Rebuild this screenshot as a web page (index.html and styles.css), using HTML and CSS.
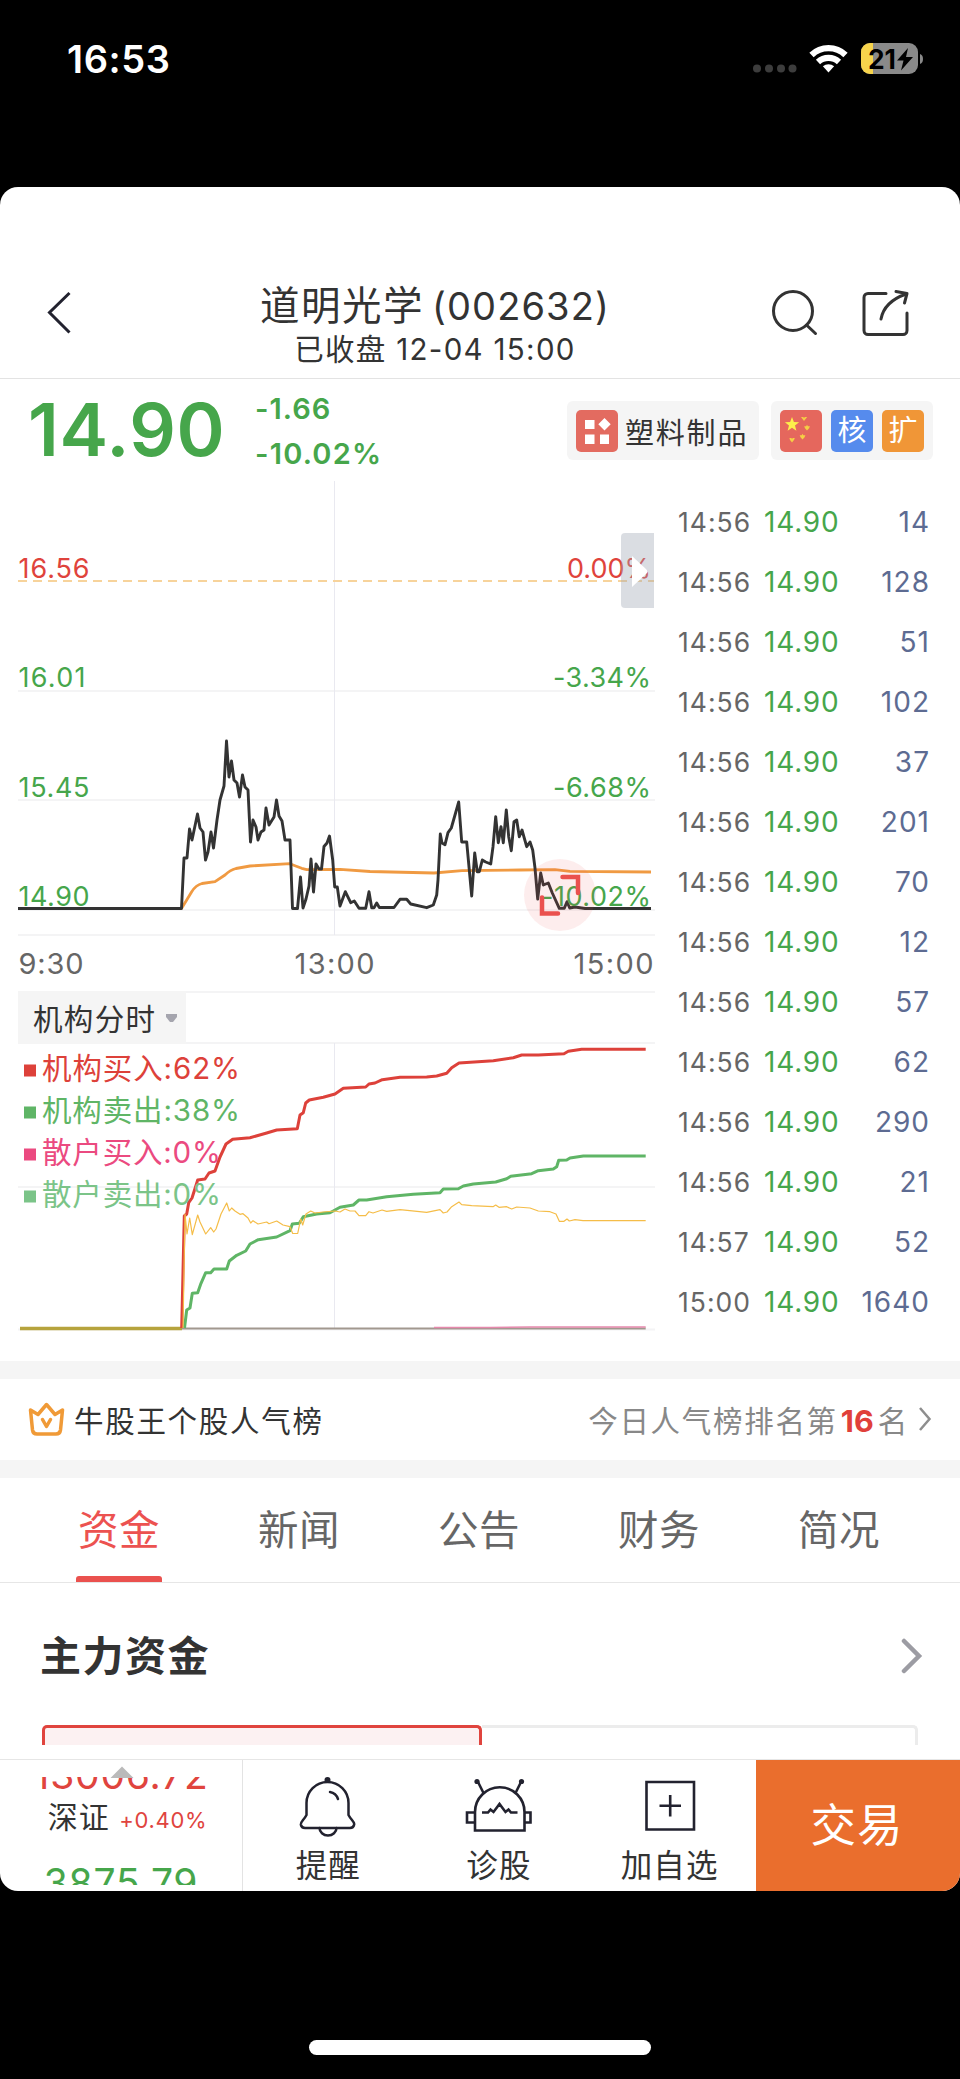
FILE: index.html
```html
<!DOCTYPE html>
<html lang="zh-CN">
<head>
<meta charset="utf-8">
<title>道明光学 (002632)</title>
<link rel="stylesheet" href="styles.css">
</head>
<body>
<div class="status">
  <span class="clock">16:53</span>
  <svg class="status-icons" width="172" height="34" viewBox="752 42 172 34">
    <g fill="#3d3d3d"><circle cx="757" cy="68.500" r="4"/><circle cx="769" cy="68.500" r="4"/><circle cx="781" cy="68.500" r="4"/><circle cx="792.500" cy="68.500" r="4"/></g>
    <g fill="none" stroke="#fff" stroke-width="6.200"><path d="M811.500 55a24.500 24.500 0 0 1 34 0"/><path d="M818 62a15.500 15.500 0 0 1 21 0"/></g>
    <path d="M828.500 72.500l-5.600-6.200a8.500 8.500 0 0 1 11.200 0z" fill="#fff"/>
    <rect x="861" y="43" width="57" height="31" rx="9" fill="#8a8a8a"/>
    <path d="M873 43h-3a9 9 0 0 0-9 9v13a9 9 0 0 0 9 9h3z" fill="#f7d44c"/>
    <path d="M920 54c4 1 4 9 0 10z" fill="#8a8a8a"/>
    <text class="battery-level" x="868" y="69" textLength="28" lengthAdjust="spacingAndGlyphs">21</text>
    <path d="M908 48l-11 12.500h6.500l-2.500 10 12-13.500h-7z" fill="#000"/>
  </svg>
</div>

<main class="sheet">
  <header class="header">
    <svg class="back" width="30" height="50" viewBox="44 288 30 50"><path d="M69.500 293L49.500 312.500 69.500 332.500" fill="none" stroke="#22222f" stroke-width="3"/></svg>
    <div class="heading">
      <h1 class="stock">道明光学<span class="code">(002632)</span></h1>
      <p class="session">已收盘 12-04 15:00</p>
    </div>
    <svg class="header-icons" width="142" height="50" viewBox="770 288 142 50">
      <g fill="none" stroke="#333" stroke-width="3" stroke-linecap="round" stroke-linejoin="round">
        <circle cx="793" cy="311" r="19.500"/><path d="M806.500 325l9 8.500"/>
        <path d="M886 293.500h-18a4 4 0 0 0-4 4v33a4 4 0 0 0 4 4h35a4 4 0 0 0 4-4v-17.500"/>
        <path d="M881 319c2-11 11-20 25-25M896 291.500l11 2-2.500 9.500"/>
      </g>
    </svg>
  </header>

  <section class="quote">
    <strong class="price">14.90</strong>
    <div class="change"><span>-1.66</span><span class="percent">-10.02%</span></div>
    <div class="chip chip-sector">
      <svg width="42" height="42" viewBox="0 0 42 42"><rect width="42" height="42" rx="5" fill="#e36b60"/><path fill="#fff" d="M9 10h9.500v9H9zM9 24.500h9.500V34H9zM24 24.500h9V34h-9zM28.500 8l6.200 6.300-6.200 6.300-6.200-6.300z"/></svg>
      <span class="sector">塑料制品</span>
    </div>
    <div class="chip chip-marks">
      <svg width="42" height="42" viewBox="0 0 42 42"><rect width="42" height="42" rx="5" fill="#e5675d"/>
        <path d="M12 7l1.900 5.100 5.200.2-4.100 3.300 1.400 5.200-4.400-3-4.400 3L9 15.600l-4.100-3.300 5.200-.2z" fill="#fdee4b"/>
        <path fill="#f5cf45" d="M24 11l-3-4h2l1 .7 1.200-.7h2zM27 20.500l-2-2.300-.8-2h2l.8-1.400.9 1.400h2l-.8 2zM22.500 29.500l-2-2.300-.8-2h2l.8-1.400.9 1.400h2l-.8 2zM12 32.500l-2-2.500-.6-2h1.800l.8.700 1-.7h1.800l-.8 2z"/></svg>
      <span class="mark mark-blue">核</span>
      <span class="mark mark-orange">扩</span>
    </div>
  </section>

  <section class="market">
    <svg class="charts" width="660" height="881" viewBox="0 480 660 881">
      <g class="grid">
        <path d="M18 691h637M18 800h637M18 910h637M18 935h637M18 992h637M18 1043h637M18 1187h637M18 1329.500h637" stroke="#f4f4f5" stroke-width="2"/>
        <path d="M334.500 481v454M334.500 1043v286" stroke="#e9e9f0" stroke-width="1"/>
        <path d="M18 581h636" stroke="#f7d39b" stroke-width="2" stroke-dasharray="9 6"/>
      </g>

      <g class="line">
        <path stroke="#f09a42" stroke-width="2.800" d="M18 908.500H181.500L186.700 900 191.700 891.700Q196 885 202 883.500L215 881.700 225 875Q230 870 236 868.500L250 866 290 863.700 295 865.700 301.700 868.300 306.700 869.700 340 869.300 370 871.500 434 873 462 870.700 520 870 555 869.700 570 871.300 651 872"/>
        <path stroke="#333" stroke-width="2.900" d="M18 908.500H181.500L184 858H187L189.500 829 192 840 197.500 814 200 828 203 832 205.500 860 208 852 211 832 213.500 848 217 820 220 800 224 786 226.500 741 229 777 231.500 761 234 780 237 783 239.500 797 242.500 775 245 787 248 790 250.500 842 253 820 256 827 258 840 261 832 264 830 266 808 269 825 274 817 276.500 800 279 816 282 821 285 840H290L292.500 908.500H297.500L300.500 877 303 908 306 899 309 886 311 859 313.500 892 316 864 319 869H321.500L324 846.500 327 843 329.500 836 332.700 860 334.700 887H337.300L340 906 345.300 891.700 350.700 902.700 354.300 901 359 908.300H365.700L369 891.700 371.700 907.700H374L376.700 903 379.300 907.500H394L400 899.300H406.700L410.700 904 426.700 907.700 433.300 905 436.700 895 438 880 440.300 834 442 843 445 844.700 448 832.700 451.300 828 458.700 802 461.700 842H466.700L471.700 896 474.700 853 477.300 871.700H479.300L482.300 860 485.700 862 490.700 864 493 846.700 495.700 816.700 498.300 842.700 501 826.700 503.300 842.700 506.300 810 508.700 836.700 511.300 850.700 514 821.700 516.700 820 519.300 836.700 522 830 526.700 846.700 530 842 532.700 850 535 868 537.700 899 540.700 873 543.300 885 548.300 883 552.300 893 559.300 908.300H564.300L567 901.700 569.700 908 575 907 585 908.500H651"/>
      </g>

      <g class="axis red"><text x="18.500" y="577.500" textLength="71">16.56</text><text x="567" y="577.500" textLength="84">0.00%</text></g>
      <g class="axis green">
        <text x="18.500" y="686.500" textLength="67">16.01</text><text x="18.500" y="796.500" textLength="71">15.45</text><text x="18.500" y="905.500" textLength="71">14.90</text>
        <text x="553" y="686.500" textLength="98">-3.34%</text><text x="553" y="796.500" textLength="98">-6.68%</text><text x="541" y="905.500" textLength="110">-10.02%</text>
      </g>
      <g class="hours"><text x="18.500" y="973.500" textLength="65">9:30</text><text x="294.500" y="973.500" textLength="80">13:00</text><text x="573.500" y="973.500" textLength="80">15:00</text></g>

      <path d="M654 533H625q-4 0-4 4v67q0 4 4 4H654z" fill="#9ea5b3" fill-opacity=".38"/>
      <path d="M632 556l15 14q1.500 1.500 0 3L632 587z" fill="#fff"/>
      <circle cx="560" cy="895" r="36" fill="#e94f4c" fill-opacity=".1"/>
      <path d="M562.500 877H578v16M542 897.500V913.500H558" fill="none" stroke="#ea514e" stroke-width="4.500" stroke-linecap="round"/>

      <rect x="18" y="991" width="168" height="53" fill="#f5f5f5"/>
      <text class="selector" x="33" y="1030" textLength="122">机构分时</text>
      <path d="M166 1014h11v3l-4 5h-3l-4-5z" fill="#a5a5ae"/>

      <g class="line">
        <path stroke="#b6a33d" stroke-width="3.600" d="M20 1328.500H182"/>
        <path stroke="#a1988f" stroke-width="1.800" d="M182 1328.500H645.700"/>
        <path stroke="#e689ad" stroke-width="1.500" d="M434 1327.500H490L530 1327H645.700"/>
        <path stroke="#dd413a" stroke-width="3" d="M181.700 1328L184.300 1216 186.700 1214 188.700 1202.700 192 1198 197.700 1180 205 1179 209 1173 215 1171 220 1157 226 1144 232.700 1139.300 250 1137.700 266.700 1133 276.700 1130 297.300 1128.700 300 1115 303.300 1112.700 305.700 1103 309.300 1100 323.300 1097.300 335 1094 343.300 1088.300 365.700 1087 369 1084 375 1083 382.300 1079.700 400 1077.300 426.700 1077 436.700 1076 446.700 1073.300 451.700 1067.700 459 1063 493.300 1060.700 513.300 1057.700 521.700 1055 538.300 1055 564 1053.700 568.300 1051.300 581.700 1049.300H645.700"/>
        <path stroke="#5fb566" stroke-width="3" d="M184.500 1328L186.700 1310 190 1308 192.300 1293.300 197.700 1292.700 201 1283.300 205.700 1272.700H210.700L214 1269H226.700L229.300 1261 236.700 1255.300 245.700 1251 250 1244 258.300 1239.700 276.700 1237 290 1230.700 292.300 1224 299.300 1223.300 303.300 1216.700 316.700 1214 330 1212.700 340 1207.300 353.300 1205 359 1200H366.700L386.700 1196.700 413.300 1194.300 440 1192.700 443.300 1189 458.300 1188.700 463.300 1186 473.300 1184 495.700 1182 506.700 1178.700 510.700 1176.300 531.700 1173.700 538.300 1170.700 553.300 1169 556.700 1166.700 558.700 1160.300 566.700 1160 570 1158 583.300 1156H645.700"/>
        <path stroke="#f5bd48" stroke-width="1.200" d="M183 1328L185 1214 187 1234 189.700 1218 192.300 1234.700 197.700 1215 200 1222 205.700 1234 210.700 1227.700 213.700 1232 216 1229 221 1214 226.700 1203 229.300 1211 231.700 1208 235 1211 240 1214.300 243 1213.700 248 1218 250.700 1223 253 1220.700 258 1224 266.700 1222 269 1223.700 276.700 1221 283 1225 290 1226.700 292.700 1233.500H297.700L300.700 1219 302.700 1225 306 1214 310.700 1211 315 1213 323 1212 335 1211 340 1212 345 1209 350 1211H355L359 1215.700H365.700L369 1211.700 373 1213 382 1210 386.700 1211.300 400 1209.700 426.700 1212.300 440 1209.700 443.300 1213 447 1212 451.700 1206.700 459 1202 461.700 1204.700 471.700 1205.700 493 1206.700 495.700 1205 499 1207.300 506.700 1206.700 511.700 1209 516.700 1207 530 1208 538.300 1211 550 1211.700 556 1214 559.300 1221.300H564L567 1219 569.300 1221 575 1219.700 583 1220.700H645.700"/>
      </g>

      <g class="legend">
        <g fill="#dd413a"><rect x="24" y="1064.500" width="12" height="12"/><text x="42" y="1078.500" textLength="198">机构买入:62%</text></g>
        <g fill="#5fb566"><rect x="24" y="1106.500" width="12" height="12"/><text x="42" y="1120.500" textLength="198">机构卖出:38%</text></g>
        <g fill="#eb4a80"><rect x="24" y="1148.500" width="12" height="12"/><text x="42" y="1162.500" textLength="179">散户买入:0%</text></g>
        <g fill="#7bc488"><rect x="24" y="1190.500" width="12" height="12"/><text x="42" y="1204.500" textLength="179">散户卖出:0%</text></g>
      </g>
    </svg>

    <ul class="ticks">
      <li><time>14:56</time><b>14.90</b><i>14</i></li>
      <li><time>14:56</time><b>14.90</b><i>128</i></li>
      <li><time>14:56</time><b>14.90</b><i>51</i></li>
      <li><time>14:56</time><b>14.90</b><i>102</i></li>
      <li><time>14:56</time><b>14.90</b><i>37</i></li>
      <li><time>14:56</time><b>14.90</b><i>201</i></li>
      <li><time>14:56</time><b>14.90</b><i>70</i></li>
      <li><time>14:56</time><b>14.90</b><i>12</i></li>
      <li><time>14:56</time><b>14.90</b><i>57</i></li>
      <li><time>14:56</time><b>14.90</b><i>62</i></li>
      <li><time>14:56</time><b>14.90</b><i>290</i></li>
      <li><time>14:56</time><b>14.90</b><i>21</i></li>
      <li><time>14:57</time><b>14.90</b><i>52</i></li>
      <li><time>15:00</time><b>14.90</b><i>1640</i></li>
    </ul>
  </section>

  <section class="rank">
    <svg width="38" height="34" viewBox="28 1403 38 34"><g fill="none" stroke="#f09a37" stroke-width="3.500" stroke-linejoin="round" stroke-linecap="round"><path d="M30.500 1411l7.500 4.500 8.500-10 8.500 10 7.500-4.500-2 20q-.5 4-4.500 4h-19q-4 0-4.500-4z"/><path d="M42.500 1420.500l4 7 4-7"/></g></svg>
    <span class="rank-title">牛股王个股人气榜</span>
    <span class="rank-text">今日人气榜排名第<b>16</b>名</span>
    <svg width="14" height="26" viewBox="0 0 14 26"><path d="M2 2l9.500 11L2 24" fill="none" stroke="#8e8e8e" stroke-width="2.500"/></svg>
  </section>

  <nav class="tabs"><span class="tab active">资金</span><span class="tab">新闻</span><span class="tab">公告</span><span class="tab">财务</span><span class="tab">简况</span></nav>

  <section class="funds">
    <div class="funds-head">
      <h2>主力资金</h2>
      <svg width="22" height="36" viewBox="0 0 22 36"><path d="M3 3l15 15L3 33" fill="none" stroke="#9c9ca3" stroke-width="4.500" stroke-linecap="round"/></svg>
    </div>
    <div class="segments"><div class="segment on"></div><div class="segment"></div></div>
  </section>

  <footer class="bar">
    <div class="indices">
      <div class="index-window">
        <div class="index-reel">
          <span class="index-value up">13006.72</span>
          <span class="index-name">深证 <small>+0.40%</small></span>
          <span class="index-value down">3875.79</span>
        </div>
      </div>
      <svg class="caret" width="24" height="12" viewBox="0 0 24 12"><path d="M12 0.500L23.500 12H.5z" fill="#bababa"/></svg>
    </div>
    <div class="actions">
      <div class="action"><svg width="68" height="62" viewBox="295 1776 68 62"><g fill="none" stroke="#22222f" stroke-width="2.500" stroke-linejoin="round" stroke-linecap="round"><path d="M307.500 1815v-12a21 21 0 0 1 42 0v12q1 2 3.500 5 2.500 3 2.200 4.500-.7 3.500-4.200 3.500H306q-3.500 0-4.200-3.500-.2-1.500 2.200-4.500 2.500-3 3.500-5z"/><path d="M320.500 1828a8.500 7.500 0 0 0 17 0M331 1792q6 1 8 7"/></g><circle cx="328.500" cy="1780" r="3" fill="#22222f"/></svg><span>提醒</span></div>
      <div class="action"><svg width="68" height="62" viewBox="465 1776 68 62"><g fill="none" stroke="#22222f" stroke-width="2.600"><path d="M475 1830.500v-18.500a24 24 0 0 1 49.500 0v18.500zM475 1812.500h-8v10h8M524.500 1812.500h6v10h-6M483.500 1793l-6-12M515.500 1793l6-12"/><path d="M482 1812.500h6l2.500-3 3 2.500 6-8 6 8 3-2.500 2.500 3h6.500"/></g><circle cx="477" cy="1781.500" r="2.600" fill="#22222f"/><circle cx="521.500" cy="1781.500" r="2.600" fill="#22222f"/></svg><span>诊股</span></div>
      <div class="action"><svg width="68" height="62" viewBox="636.500 1776 68 62"><path d="M647 1782h47.500v47.500H647zM660 1805.700h21.500M670.700 1795v21.500" fill="none" stroke="#22222f" stroke-width="2.600"/></svg><span>加自选</span></div>
    </div>
    <div class="trade">交易</div>
  </footer>
</main>
<div class="home"></div>
</body>
</html>
```
FILE: styles.css
```css
* { box-sizing: border-box; margin: 0; padding: 0; }

body {
  width: 960px;
  height: 2079px;
  overflow: hidden;
  background: #000;
  color: #333;
  font-family: Inter, "Noto Sans CJK SC", sans-serif;
  font-feature-settings: "calt" 0;
}

svg { display: block; flex: none; }

.status {
  display: flex;
  justify-content: space-between;
  align-items: flex-start;
  height: 187px;
  padding: 42px 36px 0 67px;
}
.clock { font-size: 38px; font-weight: 600; line-height: 34px; letter-spacing: .6px; color: #fff; }
.battery-level { font-size: 27px; font-weight: 700; }

.sheet {
  display: flex;
  flex-direction: column;
  height: 1704px;
  border-radius: 18px;
  overflow: hidden;
  background: #fff;
}

.header {
  display: flex;
  height: 192px;
  padding: 95px 48px 0 44px;
  border-bottom: 1px solid #e3e3e3;
}
.back, .header-icons { margin-top: 6px; }
.header-icons { margin-left: auto; }
.heading { flex: none; width: 360px; margin-left: 181px; padding-left: 2px; margin-right: -60px; text-align: center; }
.heading { margin-left: 180px; }
.stock { font-size: 39.500px; font-weight: 400; line-height: 48px; letter-spacing: 1.500px; white-space: nowrap; }
.code { margin-left: 8px; font-size: 38px; letter-spacing: 1.100px; }
.session { font-size: 29.500px; line-height: 38px; letter-spacing: 1.300px; white-space: nowrap; }

.quote { display: flex; align-items: flex-start; height: 101px; color: #46a64b; }
.price { width: 227px; margin: 14px 0 0 28px; font-size: 73px; font-weight: 600; line-height: 74px; letter-spacing: .6px; }
.change { display: flex; flex-direction: column; width: 312px; margin-top: 8px; font-size: 29px; font-weight: 600; line-height: 44.500px; letter-spacing: 1px; }
.percent { letter-spacing: 1.200px; }
.chip { display: flex; align-items: center; height: 59px; margin-top: 22px; padding: 0 9px; border-radius: 6px; background: #f5f5f5; color: #333; }
.chip-sector { width: 192px; gap: 7px; }
.chip-marks { width: 162px; gap: 9px; margin-left: 12px; }
.sector { font-size: 29px; letter-spacing: 1.800px; white-space: nowrap; }
.mark { width: 42px; height: 42px; border-radius: 5px; font-size: 29px; line-height: 42px; text-align: center; color: #fff; }
.mark-blue { background: #568bed; }
.mark-orange { background: #f09637; }

.market { display: flex; height: 881px; }
.line { fill: none; stroke-linejoin: round; }
.axis { font-size: 27px; }
.red { fill: #df433c; }
.green { fill: #46a64b; }
.hours { font-size: 29px; fill: #666; }
.selector { font-size: 29.500px; fill: #333; }
.legend { font-size: 29.500px; }

.ticks { flex: 1; padding: 12px 30px 0 18px; list-style: none; }
.ticks li { display: flex; align-items: center; height: 60px; font-size: 28px; line-height: 60px; }
.ticks time { width: 86px; font-size: 26.500px; letter-spacing: 1px; color: #666; }
.ticks b { font-weight: 400; letter-spacing: .8px; color: #46a64b; }
.ticks i { margin-left: auto; font-style: normal; letter-spacing: 1px; color: #5d6b92; }

.rank { display: flex; align-items: center; height: 117px; padding: 0 28px 2px 28px; border: solid #f5f5f5; border-width: 18px 0; }
.rank-title { margin-left: 8px; font-size: 29.500px; letter-spacing: 1.700px; }
.rank-text { margin: 0 9px 0 auto; font-size: 29.500px; letter-spacing: 1.700px; color: #888; }
.rank-text b { margin: 0 4px 0 3px; font-size: 30.500px; font-weight: 700; letter-spacing: 0; color: #e0403a; }

.tabs { display: flex; height: 105px; padding: 0 31px 0 29px; border-bottom: 1px solid #e6e6e6; }
.tab { display: flex; flex: 1; flex-direction: column; align-items: center; padding-top: 2px; font-size: 40.500px; line-height: 102px; letter-spacing: .5px; color: #666; }
.active { color: #ec5250; }
.active::after { content: ""; width: 86px; height: 6px; margin-top: -6px; border-radius: 3px 3px 0 0; background: #ea514e; }

.funds { height: 176px; padding: 0 37px 0 40px; }
.funds-head { display: flex; align-items: center; justify-content: space-between; height: 141px; padding-top: 5px; }
.funds h2 { font-size: 41px; font-weight: 700; line-height: 60px; letter-spacing: 1.500px; }
.segments { display: flex; height: 20px; margin-top: 1px; padding: 0 5px 0 2px; }
.segment { flex: 1; border: 3px solid #ececec; border-width: 3px 3px 0 0; border-radius: 0 5px 0 0; }
.on { flex: 0 0 440px; border-color: #e0443e; border-width: 3px 3px 0 3px; border-radius: 5px 5px 0 0; background: #fcf1f2; }
.funds { height: 176px; }

.bar { display: flex; height: 132px; margin-top: 0; border-top: 1px solid #e6e6e6; }
.indices { position: relative; width: 243px; padding: 17px 0 6px; border-right: 1px solid #e3e3e3; }
.index-window { height: 108px; overflow: hidden; }
.index-reel { display: flex; flex-direction: column; align-items: center; margin-top: -25px; }
.index-value { font-size: 39px; line-height: 46px; letter-spacing: .8px; white-space: nowrap; }
.index-name { margin-top: -4px; padding-left: 13px; font-size: 30px; line-height: 46px; letter-spacing: 1px; white-space: nowrap; }
.index-name small { font-size: 22px; letter-spacing: .7px; color: #e0443e; }
.up { color: #e0443e; }
.down { margin-top: 17px; color: #46a64b; }
.caret { position: absolute; left: 110px; top: 6px; }
.actions { display: flex; flex: 1; padding: 0 1px 0 0; }
.action { display: flex; flex: 1; flex-direction: column; align-items: center; padding-top: 16px; font-size: 31.500px; line-height: 46px; letter-spacing: 1.200px; white-space: nowrap; }
.action span { margin-top: 5px; }
.trade { width: 204px; padding-right: 2px; background: #ea6e2d; font-size: 45.500px; line-height: 132px; letter-spacing: 1px; text-align: center; color: #fff; }

.home { width: 342px; height: 15px; margin: 149px auto 0; border-radius: 8px; background: #fff; }
```
